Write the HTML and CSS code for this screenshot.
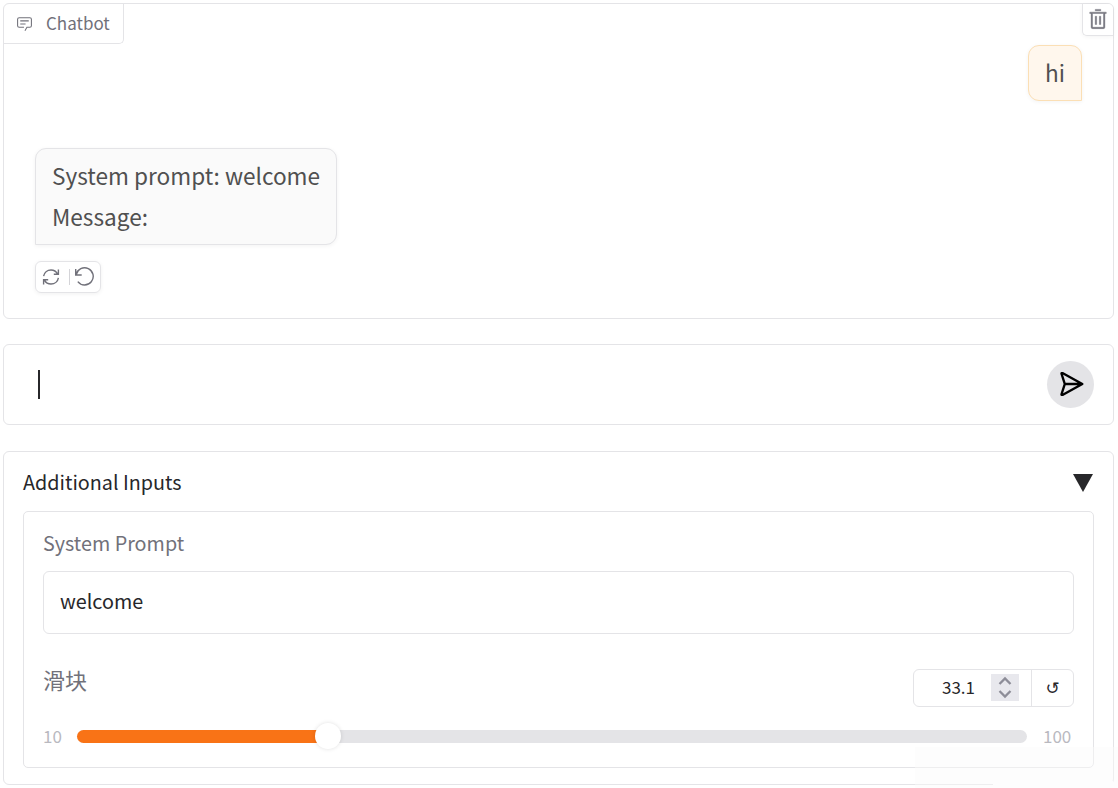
FILE: index.html
```html
<!DOCTYPE html>
<html lang="en">
<head>
<meta charset="utf-8">
<title>Chatbot</title>
<link rel="stylesheet" href="styles.css">
</head>
<body>
<main class="app">
  <section class="panel chat">
    <header class="chat-head">
      <div class="chat-label">
        <svg class="label-icon" viewBox="0 0 32 32" fill="currentColor"><path d="M17.74 30 16 29l4-7h6a2 2 0 0 0 2-2V8a2 2 0 0 0-2-2H6a2 2 0 0 0-2 2v12a2 2 0 0 0 2 2h9v2H6a4 4 0 0 1-4-4V8a4 4 0 0 1 4-4h20a4 4 0 0 1 4 4v12a4 4 0 0 1-4 4h-4.84Z"/><path d="M8 10h16v2H8zM8 16h10v2H8z"/></svg>
        <span>Chatbot</span>
      </div>
      <button class="clear" aria-label="Clear">
        <svg viewBox="0 0 32 32" fill="currentColor"><path d="M12 12h2v12h-2zM18 12h2v12h-2z" stroke="currentColor" stroke-width=".6"/><path d="M4 6v2h2v20a2 2 0 0 0 2 2h16a2 2 0 0 0 2-2V8h2V6Zm4 22V8h16v20ZM12 2h8v2h-8z" stroke="currentColor" stroke-width=".6"/></svg>
      </button>
    </header>
    <div class="messages">
      <div class="bubble user">hi</div>
      <div class="bubble bot"><p>System prompt: welcome</p><p>Message:</p></div>
      <div class="actions">
        <svg class="retry" viewBox="0 0 18 18" fill="none" stroke="currentColor" stroke-width="1.4"><path d="M1.600 8.200C2.200 4.600 5.200 2 9 2c2.900 0 5.300 1.500 6.500 3.900M16.400 1.600v4.600h-4.600M16.400 9.800C15.800 13.400 12.800 16 9 16c-2.900 0-5.300-1.500-6.500-3.900M1.600 16.400v-4.600h4.600"/></svg>
        <span class="rule"></span>
        <svg class="undo" viewBox="0 0 22 20" fill="none" stroke="currentColor" stroke-width="1.4"><path d="M1.700 2v6h6M2.200 7.600A8.600 8.600 0 1 1 3.800 14.600"/></svg>
      </div>
    </div>
  </section>

  <section class="panel composer">
    <span class="caret"></span>
    <button class="send" aria-label="Send">
      <svg viewBox="0 0 24 24" fill="none" stroke="#000" stroke-width="2.4" stroke-linejoin="round" stroke-linecap="round"><path d="M1.600 2C1.300 1 2 .8 2.900 1.300L22.300 12 2.900 22.700C2 23.200 1.300 23 1.600 22L4.800 12ZM4.800 12H20"/></svg>
    </button>
  </section>

  <section class="panel extra">
    <header class="extra-head">
      <span>Additional Inputs</span>
      <svg class="arrow" viewBox="0 0 20 18"><path d="M0 0h20L10 18Z" fill="#27272a"/></svg>
    </header>
    <div class="form">
      <div class="field-label">System Prompt</div>
      <div class="field">welcome</div>
      <div class="slider-head">
        <div class="cjk-label" lang="zh">滑块</div>
        <div class="number">
          <span class="value">33.1</span>
          <span class="spin"><svg viewBox="0 0 28 27" fill="none" stroke="#8d8d98" stroke-width="2.3"><path d="m8.500 10 5.500-5.500 5.500 5.500M8.500 17l5.500 5.500 5.500-5.500"/></svg></span>
          <span class="reset">↺</span>
        </div>
      </div>
      <div class="slider">
        <span class="min">10</span>
        <div class="track"><div class="fill"></div><div class="thumb"></div></div>
        <span class="max">100</span>
      </div>
    </div>
  </section>
  <div class="status"></div>
</main>
</body>
</html>
```
FILE: styles.css
```css
* { box-sizing: border-box; }
body {
  margin: 0;
  background: #fff;
  color: #27272a;
  font-family: "Noto Sans CJK SC", "Noto Sans", sans-serif;
}
p { margin: 0; }
svg { display: block; }
button { font: inherit; padding: 0; color: inherit; }
.app {
  position: relative;
  width: 1118px;
  height: 788px;
  padding: 3px 4px 0 3px;
  display: flex;
  flex-direction: column;
  overflow: hidden;
}
.panel { border: 1px solid #e4e4e7; border-radius: 6px; flex: none; }
.chat { height: 316px; margin-bottom: 25px; }
.chat-head { display: flex; justify-content: space-between; height: 41px; }
.chat-label {
  width: 120px;
  height: 40px;
  display: flex;
  align-items: center;
  gap: 13px;
  padding-left: 12px;
  border: solid #e4e4e7;
  border-width: 0 1px 1px 0;
  border-radius: 0 0 5px 0;
  color: #71717a;
  font-size: 17px;
  line-height: 36px;
}
.chat-label span { padding-bottom: 2px; }
.label-icon { width: 17px; height: 17px; }
.clear {
  width: 31px;
  height: 32px;
  display: flex;
  justify-content: center;
  padding-top: 4px;
  background: #fff;
  border: solid #e4e4e7;
  border-width: 0 0 1px 1px;
  border-radius: 0 5px 0 5px;
  box-shadow: 0 1px 4px #0000000c;
  color: #71717a;
}
.clear svg { width: 22px; height: 22px; }
.messages {
  display: flex;
  flex-direction: column;
  align-items: flex-start;
  padding: 0 31px;
}
.bubble {
  border: 1px solid #e4e4e7;
  box-shadow: 0 1px 4px #0000000d;
  color: #505050;
  font-size: 22.6px;
  line-height: 41px;
}
.user {
  align-self: flex-end;
  width: 54px;
  height: 56px;
  padding: 6px 0 0 16px;
  background: #fff7ed;
  border-color: #fbdfb5;
  border-radius: 11px 11px 0 11px;
}
.bot {
  width: 302px;
  height: 97px;
  margin-top: 47px;
  padding: 6px 0 0 16px;
  background: #fafafa;
  border-radius: 11px 11px 11px 0;
  white-space: nowrap;
}
.actions {
  width: 66px;
  height: 32px;
  margin-top: 16px;
  padding: 0 4px 0 6px;
  display: flex;
  align-items: center;
  justify-content: space-between;
  border: 1px solid #e4e4e7;
  border-radius: 6px;
  box-shadow: 0 1px 4px #0000000f;
  color: #71717a;
}
.retry { width: 18px; height: 18px; }
.rule { width: 1px; height: 16px; margin-left: 4px; background: #d4d4d8; }
.undo { width: 22px; height: 20px; }
.composer {
  height: 81px;
  margin-bottom: 26px;
  padding: 0 19px 0 34px;
  display: flex;
  align-items: center;
  justify-content: space-between;
}
.caret { width: 2px; height: 29px; background: #27272a; }
.send {
  width: 47px;
  height: 47px;
  display: grid;
  place-items: center;
  border: 0;
  border-radius: 50%;
  background: #e4e4e7;
}
.send svg { width: 24px; height: 24px; margin: 0 0 1px 3px; }
.extra { height: 334px; padding: 0 19px; }
.extra-head {
  height: 59px;
  display: flex;
  align-items: center;
  justify-content: space-between;
  font-size: 19.75px;
  line-height: 30px;
}
.arrow { width: 20px; height: 18px; margin: 3px 1px 0 0; }
.form {
  height: 257px;
  padding: 16px 19px 0;
  border: 1px solid #e4e4e7;
  border-radius: 5px;
}
.field-label { height: 43px; color: #71717a; font-size: 19.75px; line-height: 29px; }
.field {
  height: 63px;
  padding-left: 16px;
  border: 1px solid #e4e4e7;
  border-radius: 6px;
  font-size: 19.75px;
  line-height: 58px;
}
.slider-head { display: flex; justify-content: space-between; height: 73px; padding-top: 35px; }
.cjk-label { color: #71717a; font-size: 22px; line-height: 20px; }
.number {
  width: 161px;
  height: 38px;
  display: grid;
  grid-template-columns: 77px 28px 12px 42px;
  align-items: center;
  border: 1px solid #e4e4e7;
  border-radius: 6px;
  font-size: 17px;
}
.value { padding-left: 28px; padding-bottom: 3px; line-height: 33px; }
.spin { width: 28px; height: 27px; margin-bottom: 1px; background: #e8e8ed; }
.reset {
  grid-column: 4;
  height: 36px;
  border-left: 1px solid #e4e4e7;
  text-align: center;
  font: 17px/37px "DejaVu Sans", sans-serif;
}
.slider {
  display: flex;
  align-items: center;
  height: 58px;
  color: #b9b9bf;
  font-size: 17px;
  line-height: 24px;
}
.min { width: 34px; padding-bottom: 1px; }
.track { position: relative; width: 950px; height: 13px; border-radius: 7px; background: #e4e4e7; }
.fill { width: 251px; height: 13px; border-radius: 7px 0 0 7px; background: #f97316; }
.thumb {
  position: absolute;
  left: 238px;
  top: -7px;
  width: 26px;
  height: 26px;
  border-radius: 50%;
  background: #fff;
  box-shadow: 0 0 4px #00000020;
}
.max { margin-left: 16px; padding-bottom: 1px; }
.status {
  position: absolute;
  right: 0;
  bottom: 0;
  width: 203px;
  height: 41px;
  background: linear-gradient(#fdfdfd, #fdfdfd) 78px 34px / 120px 7px no-repeat, #fafafa70;
}
```
